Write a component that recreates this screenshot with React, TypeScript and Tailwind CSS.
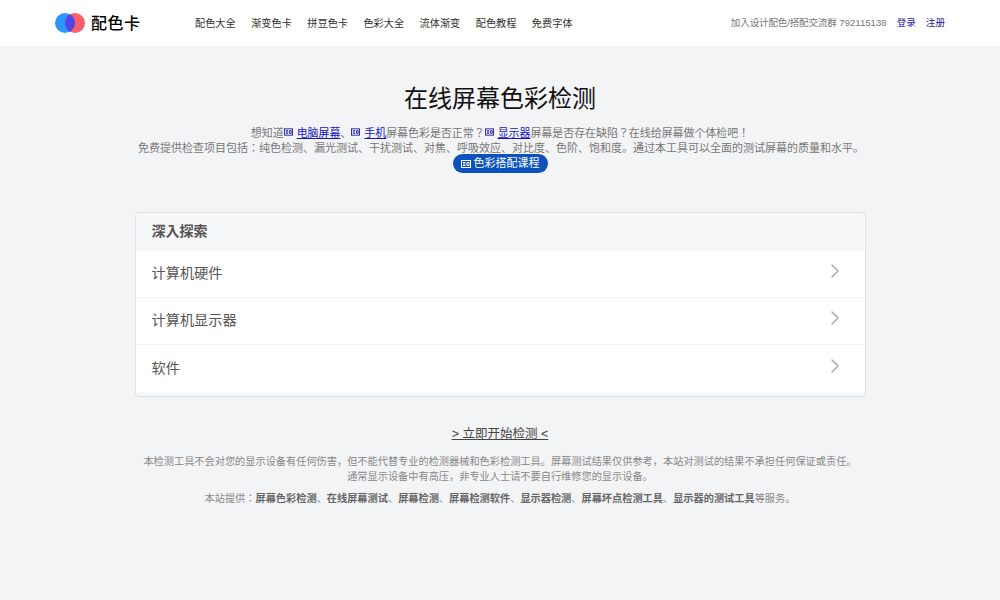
import { ChevronRight } from "lucide-react";

const NAV_LINKS = ["配色大全", "渐变色卡", "拼豆色卡", "色彩大全", "流体渐变", "配色教程", "免费字体"];
const EXPLORE_ITEMS = ["计算机硬件", "计算机显示器", "软件"];
const SERVICES = ["屏幕色彩检测", "在线屏幕测试", "屏幕检测", "屏幕检测软件", "显示器检测", "屏幕坏点检测工具", "显示器的测试工具"];

function TvIcon({ className }: { className: string }) {
  return (
    <svg viewBox="0 0 10 8" className={className} fill="none" stroke="currentColor" strokeWidth="1">
      <rect x="0.5" y="0.5" width="9" height="7" />
      <path d="M2 2.5h2.5M2 4h2.5M2 5.5h2.5M6 2.5h2v3H6z" />
    </svg>
  );
}

function InlineLink({ text }: { text: string }) {
  return (
    <>
      <TvIcon className="mr-1 inline-block h-2 w-[9px] align-[1px] text-[#1a1a9c]" />
      <a href="#" className="text-[#1515c0] underline">
        {text}
      </a>
    </>
  );
}

export default function App() {
  return (
    <div className="min-h-[600px] bg-[#f3f4f6] font-['Liberation_Sans','Noto_Sans_CJK_JP',sans-serif]">
      <header className="flex h-[46px] items-center justify-between bg-white pr-[55px] pl-[55px]">
        <div className="flex items-center">
          <a href="#" className="flex w-[140px] items-center">
            <svg viewBox="0 0 30 20" className="h-5 w-[30px]">
              <circle cx="10" cy="10" r="10" fill="#2b96fb" />
              <circle cx="20" cy="10" r="10" fill="#f9606b" />
              <path d="M15 1.34A10 10 0 0 1 15 18.66A10 10 0 0 1 15 1.34Z" fill="#4f46e5" />
            </svg>
            <span className="mt-0.5 ml-1.5 text-base leading-5 font-medium tracking-[0.5px] text-black">配色卡</span>
          </a>
          <nav className="flex gap-[15.4px] pt-px text-[10.2px] text-[#333]">
            {NAV_LINKS.map((link) => (
              <a key={link} href="#">
                {link}
              </a>
            ))}
          </nav>
        </div>
        <div className="flex gap-2.5 text-[9.6px]">
          <span className="text-[#777]">
            <span className="tracking-[-0.2px]">加入设计配色/搭配交流群</span> 792115138
          </span>
          <a href="#" className="text-[#1a1a9c]">
            登录
          </a>
          <a href="#" className="text-[#1a1a9c]">
            注册
          </a>
        </div>
      </header>

      <main className="mx-auto flex w-[731px] flex-col items-center pt-[35px]">
        <h1 className="text-2xl leading-9 text-[#111]">在线屏幕色彩检测</h1>
        <div className="-mx-5 mt-[9px] w-[770px] text-center text-[11px] leading-[15px] text-[#777]">
          <p className="text-[10.95px]">
            想知道
            <InlineLink text="电脑屏幕" />、
            <InlineLink text="手机" />
            屏幕色彩是否正常？
            <InlineLink text="显示器" />
            屏幕是否存在缺陷？在线给屏幕做个体检吧！
          </p>
          <p className="pl-0.5">免费提供检查项目包括：纯色检测、漏光测试、干扰测试、对焦、呼吸效应、对比度、色阶、饱和度。通过本工具可以全面的测试屏幕的质量和水平。</p>
        </div>
        <a href="#" className="-mt-0.5 flex h-[19px] items-center gap-[3px] rounded-full bg-[#0b52bd] px-2 text-[11px] text-white">
          <TvIcon className="h-2 w-2.5 text-white" />
          色彩搭配课程
        </a>

        <section className="mt-[39px] w-full overflow-hidden rounded border border-[#dfe1e5] bg-[#f7f8fa]">
          <h2 className="h-[38px] px-4 text-sm leading-[37px] font-bold text-[#555]">深入探索</h2>
          <ul className="pb-1">
            {EXPLORE_ITEMS.map((item, index) => (
              <li
                key={item}
                className={`flex h-[47px] items-center justify-between bg-white pr-[18px] pl-4 text-[14.2px] text-[#555] ${index < 2 ? "border-b border-[#f3f4f6]" : ""}`}
              >
                {item}
                <ChevronRight className="-mt-1.5 size-6 text-[#aaa]" strokeWidth={1.5} />
              </li>
            ))}
          </ul>
        </section>

        <a href="#" className="mt-[29px] text-[12.5px] leading-4 text-[#444] underline">
          &gt; 立即开始检测 &lt;
        </a>
        <p className="mt-3 text-center text-[10.2px] leading-[15px] text-[#888]">
          本检测工具不会对您的显示设备有任何伤害，但不能代替专业的检测器械和色彩检测工具。屏幕测试结果仅供参考，本站对测试的结果不承担任何保证或责任。
          <br />
          通常显示设备中有高压，非专业人士请不要自行维修您的显示设备。
        </p>
        <p className="mt-[7px] text-center text-[10.2px] leading-[15px] text-[#888]">
          本站提供：
          {SERVICES.map((service, index) => (
            <span key={service}>
              {index > 0 && "、"}
              <strong className="font-bold text-[#666]">{service}</strong>
            </span>
          ))}
          等服务。
        </p>
      </main>
    </div>
  );
}
